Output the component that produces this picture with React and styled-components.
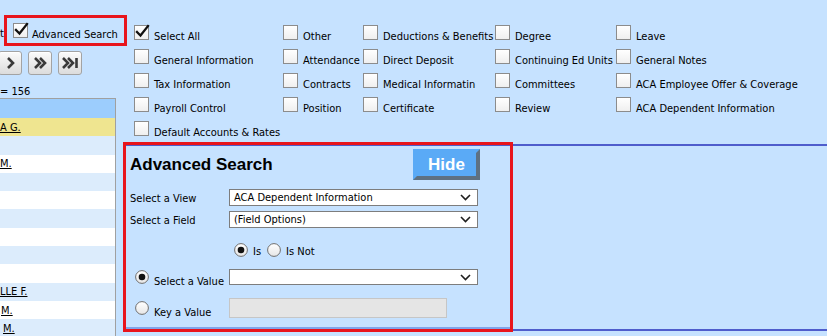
import React from "react";
import styled, { createGlobalStyle } from "styled-components";

const GlobalStyle = createGlobalStyle`
  body {
    margin: 0;
    background: #c6e2ff;
    font-family: "DejaVu Sans Condensed", "DejaVu Sans", sans-serif;
    font-stretch: condensed;
    font-size: 11px;
    color: #000;
  }
`;

const grid = [
  ["Select All", "Other", "Deductions & Benefits", "Degree", "Leave"],
  ["General Information", "Attendance", "Direct Deposit", "Continuing Ed Units", "General Notes"],
  ["Tax Information", "Contracts", "Medical Informatin", "Committees", "ACA Employee Offer & Coverage"],
  ["Payroll Control", "Position", "Certificate", "Review", "ACA Dependent Information"],
  ["Default Accounts & Rates", null, null, null, null],
];

const listRows = [
  { name: "A G.", indent: 0 },
  { name: "", indent: 0 },
  { name: "M.", indent: 0 },
  { name: "", indent: 0 },
  { name: "", indent: 0 },
  { name: "", indent: 0 },
  { name: "", indent: 0 },
  { name: "", indent: 0 },
  { name: "", indent: 0 },
  { name: "LLE F.", indent: 0 },
  { name: "M.", indent: 1 },
  { name: "M.", indent: 3 },
];

const Check = ({ checked }) => (
  <Box>
    {checked && (
      <svg width="17" height="17" viewBox="0 0 17 17">
        <path d="M3 8 L6.5 11.5 L14 2" fill="none" stroke="#111" strokeWidth="2.3" strokeLinecap="square" />
      </svg>
    )}
  </Box>
);

const Radio = ({ checked }) => (
  <RadioWrap>
    <svg width="14" height="14" viewBox="0 0 14 14">
      <defs>
        <linearGradient id="rg" x1="0" y1="0" x2="0" y2="1">
          <stop offset="0" stopColor="#ffffff" />
          <stop offset="1" stopColor="#e6e6e6" />
        </linearGradient>
      </defs>
      <circle cx="7" cy="7" r="6.4" fill="url(#rg)" stroke="#6e6e6e" strokeWidth="1" />
      {checked && <circle cx="7" cy="7" r="3.3" fill="#111" />}
    </svg>
  </RadioWrap>
);

const Chevron = () => (
  <svg width="11" height="7" viewBox="0 0 11 7">
    <path d="M1 1 L5.5 5.5 L10 1" fill="none" stroke="#1e1e1e" strokeWidth="1.6" />
  </svg>
);

const NavIcon = ({ kind }) => {
  const d = {
    next: "M10 7 L15 12 L10 17",
    fast: "M7 7 L12 12 L7 17 M12 7 L17 12 L12 17",
    last: "M5 7 L10 12 L5 17 M10 7 L15 12 L10 17 M18.5 7 V17",
  }[kind];
  return (
    <svg width="22" height="22" viewBox="1 1 22 22">
      <path d={d} fill="none" stroke="#3a3a3a" strokeWidth="2.6" />
    </svg>
  );
};

const App = () => {
  return (
    <>
      <GlobalStyle />
      <Page>
        <LeftCol>
          <Toolbar>
            <CutText>t</CutText>
            <ToggleBox>
              <Check checked />
              <ToggleText>Advanced Search</ToggleText>
            </ToggleBox>
          </Toolbar>
          <NavRow>
            <NavButton><NavIcon kind="next" /></NavButton>
            <NavButton><NavIcon kind="fast" /></NavButton>
            <NavButton><NavIcon kind="last" /></NavButton>
          </NavRow>
          <Count>= 156</Count>
          <List>
            <ListHeader />
            {listRows.map((r, i) => (
              <ListRow key={i} tone={i === 0 ? "yellow" : i % 2 ? "light" : "white"}>
                <ListName style={{ paddingLeft: r.indent }}>{r.name}</ListName>
              </ListRow>
            ))}
          </List>
        </LeftCol>

        <Main>
          <CheckGrid>
            {grid.flat().map((label, i) =>
              label ? (
                <CheckItem key={i}>
                  <Check checked={label === "Select All"} />
                  <CheckText>{label}</CheckText>
                </CheckItem>
              ) : (
                <div key={i} />
              )
            )}
          </CheckGrid>

          <Section>
            <SearchPanel>
              <TitleRow>
                <Title>Advanced Search</Title>
                <HideButton>Hide</HideButton>
              </TitleRow>

              <FieldRow gap={9}>
                <FieldLabel>Select a View</FieldLabel>
                <Select>
                  <span>ACA Dependent Information</span>
                  <Chevron />
                </Select>
              </FieldRow>

              <FieldRow gap={5}>
                <FieldLabel>Select a Field</FieldLabel>
                <Select>
                  <span>(Field Options)</span>
                  <Chevron />
                </Select>
              </FieldRow>

              <IsRow>
                <RadioItem>
                  <Radio checked />
                  <RadioText drop={1}>Is</RadioText>
                </RadioItem>
                <RadioItem>
                  <Radio />
                  <RadioText drop={1}>Is Not</RadioText>
                </RadioItem>
              </IsRow>

              <ValueRow gap={11}>
                <ValueLabel>
                  <Radio checked />
                  <RadioText drop={4}>Select a Value</RadioText>
                </ValueLabel>
                <Select small>
                  <span />
                  <Chevron />
                </Select>
              </ValueRow>

              <ValueRow gap={10}>
                <ValueLabel top={3}>
                  <Radio />
                  <RadioText drop={4}>Key a Value</RadioText>
                </ValueLabel>
                <KeyInput />
              </ValueRow>
            </SearchPanel>
          </Section>
        </Main>
      </Page>
    </>
  );
};

export default App;

const Page = styled.div`
  display: flex;
  width: 827px;
  height: 336px;
  overflow: hidden;
`;

const LeftCol = styled.div`
  width: 120px;
  flex-shrink: 0;
  display: flex;
  flex-direction: column;
`;

const Toolbar = styled.div`
  display: flex;
  align-items: flex-start;
  padding-top: 15px;
  height: 46px;
  box-sizing: border-box;
`;

const CutText = styled.span`
  width: 4px;
  margin-top: 12px;
  line-height: 13px;
`;

const ToggleBox = styled.div`
  flex-shrink: 0;
  width: 123px;
  height: 31px;
  box-sizing: border-box;
  border: 3px solid #e8141c;
  display: flex;
  align-items: flex-start;
  padding: 5px 0 0 6px;
`;

const ToggleText = styled.span`
  margin-left: 4px;
  margin-top: 5px;
  line-height: 13px;
  white-space: nowrap;
`;

const Box = styled.span`
  position: relative;
  flex-shrink: 0;
  width: 15px;
  height: 15px;
  box-sizing: border-box;
  border: 1px solid #8c8c8c;
  background: linear-gradient(#ffffff, #efefef);

  svg {
    position: absolute;
    left: -1px;
    top: -2px;
  }
`;

const NavRow = styled.div`
  display: flex;
  gap: 6px;
  margin: 5px 0 0 -2px;
`;

const NavButton = styled.div`
  width: 24px;
  height: 24px;
  box-sizing: border-box;
  border: 1px solid #a3a3a3;
  border-radius: 3px;
  background: linear-gradient(#fbfbfb, #dcdcdc);
  box-shadow: inset 0 1px 0 #ffffff;
  display: flex;
  align-items: center;
  justify-content: center;
`;

const Count = styled.div`
  margin-top: 10px;
  line-height: 13px;
  height: 13px;
`;

const List = styled.div`
  width: 116px;
  box-sizing: border-box;
  border-top: 1px solid #a0a0a0;
  border-right: 1px solid #a0a0a0;
`;

const ListHeader = styled.div`
  height: 19px;
  background: #9ccdfd;
`;

const ListRow = styled.div`
  height: 18.3px;
  display: flex;
  align-items: center;
  background: ${(p) =>
    p.tone === "yellow" ? "#efe590" : p.tone === "light" ? "#dcecfc" : "#ffffff"};
`;

const ListName = styled.span`
  text-decoration: underline;
  white-space: nowrap;
  line-height: 13px;
`;

const Main = styled.div`
  flex: 1;
  display: flex;
  flex-direction: column;
`;

const CheckGrid = styled.div`
  display: grid;
  grid-template-columns: 149px 80px 132px 121px 1fr;
  grid-auto-rows: 24px;
  padding: 25px 0 0 14px;
  height: 142px;
  box-sizing: border-box;
`;

const CheckItem = styled.div`
  display: flex;
  align-items: flex-start;
  white-space: nowrap;
`;

const CheckText = styled.span`
  margin-left: 5px;
  margin-top: 5px;
  line-height: 13px;
`;

const Section = styled.div`
  margin: 2px 0 0 3px;
  height: 187px;
  box-sizing: border-box;
  border-top: 2px solid #4f5dcc;
  border-bottom: 2px solid #4f5dcc;
  display: flex;
`;

const SearchPanel = styled.div`
  width: 390px;
  height: 190px;
  margin-top: -4px;
  box-sizing: border-box;
  border: 3px solid #e8141c;
  box-shadow: inset 0 -2px 0 #80a4ea;
  padding: 4px 30px 0 4px;
  display: flex;
  flex-direction: column;
`;

const TitleRow = styled.div`
  display: flex;
  align-items: center;
  justify-content: space-between;
  height: 31px;
`;

const Title = styled.div`
  font-family: "Liberation Sans", Arial, sans-serif;
  font-stretch: normal;
  font-size: 17px;
  font-weight: bold;
  white-space: nowrap;
`;

const HideButton = styled.div`
  width: 67px;
  height: 31px;
  box-sizing: border-box;
  border: 4px solid;
  border-color: #5aaaf6 #5e7182 #5e7182 #5aaaf6;
  background: #5aaaf6;
  color: #ffffff;
  font-family: "Liberation Sans", Arial, sans-serif;
  font-stretch: normal;
  font-size: 17px;
  font-weight: bold;
  display: flex;
  align-items: center;
  justify-content: center;
`;

const FieldRow = styled.div`
  display: flex;
  align-items: center;
  margin-top: ${(p) => p.gap}px;
`;

const FieldLabel = styled.div`
  width: 99px;
  flex-shrink: 0;
  padding-top: 2px;
  white-space: nowrap;
`;

const Select = styled.div`
  width: 249px;
  height: ${(p) => (p.small ? 16 : 17)}px;
  box-sizing: border-box;
  border: 1px solid #7d7d7d;
  background: #ffffff;
  display: flex;
  align-items: center;
  justify-content: space-between;
  padding: 0 6px 0 4px;
  white-space: nowrap;
`;

const IsRow = styled.div`
  display: flex;
  margin-top: 15px;
  padding-left: 104px;
  gap: 6px;
`;

const RadioWrap = styled.span`
  display: flex;
  flex-shrink: 0;
  width: 14px;
  height: 14px;
`;

const RadioItem = styled.div`
  display: flex;
  align-items: flex-start;
  white-space: nowrap;
`;

const RadioText = styled.span`
  margin-left: 5px;
  margin-top: ${(p) => 1 + p.drop}px;
  line-height: 13px;
`;

const ValueRow = styled.div`
  display: flex;
  align-items: flex-start;
  margin-top: ${(p) => p.gap}px;
`;

const ValueLabel = styled.div`
  width: 94px;
  flex-shrink: 0;
  margin-left: 5px;
  margin-top: ${(p) => p.top || 1}px;
  display: flex;
  align-items: flex-start;
  white-space: nowrap;
`;

const KeyInput = styled.div`
  width: 218px;
  height: 20px;
  box-sizing: border-box;
  border: 1px solid #c6c6c6;
  background: #e5e5e5;
`;
